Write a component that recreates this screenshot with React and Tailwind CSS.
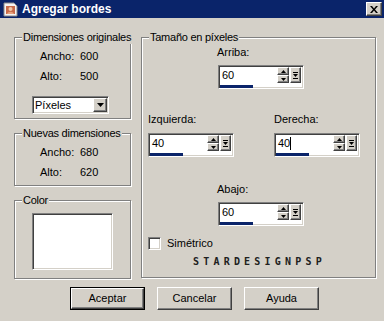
const raised =
  "bg-[#d4d0c8] border border-t-white border-l-white border-r-[#404040] border-b-[#404040] shadow-[inset_-1px_-1px_0_#808080]";
const sunken =
  "border border-t-[#808080] border-l-[#808080] border-b-white border-r-white shadow-[inset_1px_1px_0_#404040,inset_-1px_-1px_0_#d4d0c8]";
const etched = "relative border border-[#808080] shadow-[inset_1px_1px_0_#fff,1px_1px_0_#fff]";

function Group({ label, className = "", children }) {
  return (
    <div className={`${etched} ${className}`}>
      <span className="absolute -top-[7px] left-[7px] bg-[#d4d0c8] px-px leading-[13px] whitespace-nowrap tracking-[-0.25px]">
        {label}
      </span>
      {children}
    </div>
  );
}

function Tri({ down = true }) {
  return (
    <svg width="5" height="3" viewBox="0 0 5 3" className="block">
      {down ? <path d="M0 0h5L2.5 3z" fill="#000" /> : <path d="M0 3h5L2.5 0z" fill="#000" />}
    </svg>
  );
}

function Spin({ value, caret }) {
  return (
    <div className={`w-[86px] h-[24px] bg-white ${sunken} flex flex-col pl-px pr-[2px] pt-px`}>
      <div className="flex h-[16px]">
        <div className="flex-1 leading-[16px] pl-[2px] flex items-center">
          {value}
          {caret && <span className="inline-block w-px h-[13px] bg-black" />}
        </div>
        <div className="flex flex-col w-[12px]">
          <div className={`h-[8px] ${raised} flex items-center justify-center`}>
            <Tri down={false} />
          </div>
          <div className={`h-[8px] ${raised} flex items-center justify-center`}>
            <Tri />
          </div>
        </div>
        <div className={`w-[11px] ml-px ${raised} flex flex-col items-center justify-center gap-px`}>
          <div className="w-[5px] h-px bg-black" />
          <Tri />
          <div className="w-[5px] h-px bg-black" />
        </div>
      </div>
      <div className="h-[3px] w-[33px] bg-[#0a246a] mt-[2px]" />
    </div>
  );
}

function Btn({ children, def }) {
  return (
    <div className={`w-[75px] h-[23px] ${def ? "border border-black" : ""}`}>
      <div className={`w-full h-full ${raised} flex items-center justify-center`}>{children}</div>
    </div>
  );
}

function Row({ label, value }) {
  return (
    <div className="flex h-[20px] items-center pl-[25px]">
      <span className="w-[40px]">{label}</span>
      <span>{value}</span>
    </div>
  );
}

export default function App() {
  return (
    <div className="w-[384px] h-[321px] bg-[#d4d0c8] overflow-hidden font-['Liberation_Sans',Arial,sans-serif] text-[11px] text-black leading-[13px]">
      <div className="h-[18px] bg-[#0a246a] flex items-center pl-[3px] pr-[2px]">
        <svg width="15" height="15" viewBox="0 0 15 15" className="shrink-0">
          <path d="M1 1h10l3 3v10H1z" fill="#f4f4f4" stroke="#8a8a8a" />
          <rect x="3" y="4" width="9" height="8" fill="#c86b4a" />
          <circle cx="7.5" cy="7" r="2" fill="#f2c7a5" />
          <path d="M4 12c1-3 6-3 7 0z" fill="#e9a27d" />
        </svg>
        <span className="ml-[4px] text-white font-bold text-[12px]">Agregar bordes</span>
        <div className={`ml-auto w-[16px] h-[14px] ${raised} flex items-center justify-center`}>
          <svg width="8" height="7" viewBox="0 0 8 7">
            <path d="M0 0h2l2 2.5L6 0h2L5 3.5 8 7H6L4 4.5 2 7H0l3-3.5z" fill="#000" />
          </svg>
        </div>
      </div>

      <div className="flex pl-[14px] pt-[19px]">
        <div className="w-[117px] flex flex-col">
          <Group label="Dimensiones originales" className="h-[82px] pt-[8px]">
            <Row label="Ancho:" value="600" />
            <Row label="Alto:" value="500" />
            <div className={`ml-[17px] mt-[10px] w-[77px] h-[18px] bg-white ${sunken} flex items-center pl-[2px] pr-px`}>
              <span className="flex-1">Píxeles</span>
              <div className={`w-[14px] h-[14px] ${raised} flex items-center justify-center`}>
                <svg width="7" height="4" viewBox="0 0 7 4">
                  <path d="M0 0h7L3.5 4z" fill="#000" />
                </svg>
              </div>
            </div>
          </Group>
          <Group label="Nuevas dimensiones" className="h-[53px] mt-[14px] pt-[8px]">
            <Row label="Ancho:" value="680" />
            <Row label="Alto:" value="620" />
          </Group>
          <Group label="Color" className="h-[79px] mt-[14px] pt-[12px]">
            <div className={`ml-[17px] w-[81px] h-[57px] bg-white ${sunken}`} />
          </Group>
        </div>

        <Group label="Tamaño en píxeles" className="ml-[10px] w-[235px] h-[241px] pt-[8px]">
          <div className="pl-[75px]">Arriba:</div>
          <div className="pl-[76px] mt-[6px]">
            <Spin value="60" />
          </div>
          <div className="flex mt-[24px]">
            <div className="pl-[6px] w-[132px]">
              <div>Izquierda:</div>
              <div className="mt-[7px]">
                <Spin value="40" />
              </div>
            </div>
            <div>
              <div>Derecha:</div>
              <div className="mt-[7px]">
                <Spin value="40" caret />
              </div>
            </div>
          </div>
          <div className="pl-[75px] mt-[26px]">Abajo:</div>
          <div className="pl-[76px] mt-[6px]">
            <Spin value="60" />
          </div>
          <div className="flex items-center pl-[6px] mt-[11px]">
            <div className={`w-[13px] h-[13px] bg-white ${sunken}`} />
            <span className="ml-[6px]">Simétrico</span>
          </div>
          <div className="pl-[51px] mt-[7px] font-['DejaVu_Sans_Mono',monospace] font-bold text-[10px] leading-[10px] tracking-[4.2px] text-[#202020]">
            STARDESIGNPSP
          </div>
        </Group>
      </div>

      <div className="flex gap-[12px] pl-[70px] mt-[8px]">
        <Btn def>Aceptar</Btn>
        <Btn>Cancelar</Btn>
        <Btn>Ayuda</Btn>
      </div>
    </div>
  );
}
